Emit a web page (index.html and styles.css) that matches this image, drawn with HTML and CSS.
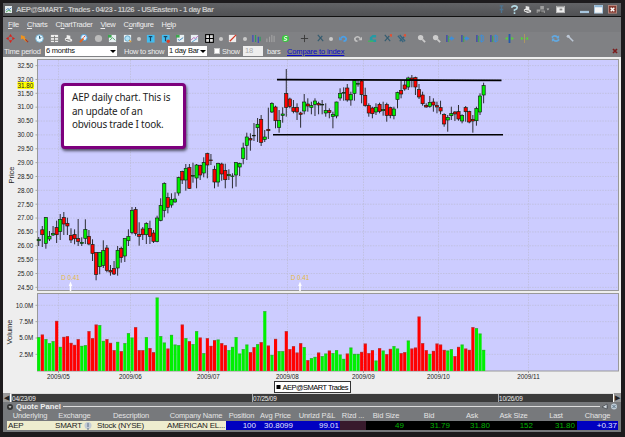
FILE: index.html
```
<!DOCTYPE html>
<html lang="en">
<head>
    <meta charset="UTF-8">
    <title>AEP@SMART - Trades</title>
    <link rel="stylesheet" href="styles.css">
</head>
<body>

<div class="window">
    <div class="title-bar">
        <svg class="app-icon" viewBox="0 0 8 8"><rect width="8" height="8" fill="#e6eef0"/><path d="M1 5l2-2 2 1 2-2" stroke="#2b6fb8" fill="none"/><path d="M1 7l3-2 3 1" stroke="#3a9a48" fill="none"/></svg>
        <span class="title">AEP@SMART - Trades - 04/23 - 11/26 &nbsp;- US/Eastern - 1 day Bar</span>
        <div class="window-tools">
            <svg class="pin" viewBox="0 0 10 10"><path d="M3 1h4M5 1v8M3 5h4" stroke="#4d7390" stroke-width="1.5" fill="none"/></svg>
            <svg class="help" viewBox="0 0 10 10"><path d="M2 3q0-2 3-2t3 2q0 1.500-3 2.500v1.500M5 8v2" stroke="#b4dbe6" stroke-width="1.800" fill="none"/></svg>
            <svg class="printer" viewBox="0 0 10 10"><path d="M3 1l4 1v3l2 1v2L5 9 1 7V5l2-1z" fill="#e8e8e8"/><path d="M2 6l5 1" stroke="#555"/></svg>
            <svg class="link" viewBox="0 0 14 10"><path d="M4 1h4v4H4zM0 5h4v4H0zM5 6h4v3H5z" fill="#a0a0a0"/><path d="M1 8h7" stroke="#333"/><path d="M11 4h3l-1.500 2z" fill="#bbb"/></svg>
            <svg class="dock" viewBox="0 0 10 10"><rect x=".5" y="1.500" width="9" height="7" fill="#eee" stroke="#bbb"/><path d="M1 2h8" stroke="#888"/><rect x="4" y="4" width="3" height="2" fill="#888"/></svg>
            <svg class="minimize" viewBox="0 0 10 10"><rect y="6.500" width="10" height="2.500" fill="#a7c6df"/></svg>
            <svg class="maximize" viewBox="0 0 10 10"><rect x=".5" y=".5" width="9" height="8.500" fill="#f5f5f5" stroke="#a7c6df"/><path d="M1 1.500h8" stroke="#8db4d4" stroke-width="2"/></svg>
            <svg class="close" viewBox="0 0 10 10"><rect x=".5" y=".5" width="9" height="8.500" fill="#84392f" stroke="#b98b82"/><path d="M3 3l4 4M7 3l-4 4" stroke="#fff" stroke-width="1.600"/></svg>
        </div>
    </div>

    <div class="menu-bar">
        <span><u>F</u>ile</span>
        <span><u>C</u>harts</span>
        <span>C<u>h</u>artTrader</span>
        <span><u>V</u>iew</span>
        <span>C<u>o</u>nfigure</span>
        <span>H<u>e</u>lp</span>
    </div>

    <!-- Filled by script.js -->
    <div class="toolbar" id="toolbar"></div>

    <div class="period-bar">
        <span class="period-label">Time period</span>
        <span class="select period-select">6 months</span>
        <span class="show-label">How to show</span>
        <span class="select bar-select">1 day Bar</span>
        <span class="checkbox"></span>
        <span class="bars-show">Show</span>
        <span class="bars-count">18</span>
        <span class="bars-label">bars</span>
        <a class="compare">Compare to index</a>
        <svg class="close-chart" viewBox="0 0 6 6"><path d="M1 1l4 4M5 1L1 5" stroke="#7b1d1d" stroke-width="1.700"/></svg>
    </div>

    <div class="chart-panel">
        <svg class="chart" id="chart" viewBox="3 57 619 336"></svg>
        <div class="note">AEP daily chart. This is<br>an update of an<br>obvious trade I took.</div>
    </div>

    <div class="timeline">
        <span class="scroll-btn">◀</span>
        <div class="timeline-track">
            <span>04/23/09</span>
            <span>07/25/09</span>
            <span>10/26/09</span>
        </div>
        <span class="scroll-btn">▶</span>
    </div>

    <div class="quote-panel">
        <div class="quote-title">
            <svg class="collapse" viewBox="0 0 6 6"><circle cx="3" cy="3" r="3" fill="#333"/><path d="M1.500 2.300h3L3 4.300z" fill="#ddd"/></svg>
            <b>Quote Panel</b>
            <i class="rule"></i>
            <svg class="quote-tools" viewBox="0 0 16 7"><path d="M0 4l5-3v5zM5 4h1" fill="#d4dbe0" stroke="#3d444a" stroke-width=".7"/><circle cx="12" cy="3.500" r="3" fill="#bccad5"/><path d="M10.500 2l3 3M13.500 2l-3 3" stroke="#5c7385"/></svg>
        </div>
        <div class="quote-row quote-head">
            <span>Underlying</span><span>Exchange</span><span>Description</span><span>Company Name</span><span>Position</span><span>Avg Price</span><span>Unrlzd P&amp;L</span><span>Rlzd ...</span><span>Bid Size</span><span>Bid</span><span>Ask</span><span>Ask Size</span><span>Last</span><span>Change</span>
        </div>
        <div class="quote-row quote-data">
            <span class="info">AEP</span>
            <span class="info exchange">SMART <svg viewBox="0 0 8 8"><circle cx="4" cy="3.500" r="3.500" fill="#c3ccd5"/><path d="M4 1v4M4 6v2" stroke="#5d718a"/></svg></span>
            <span class="info">Stock (NYSE)</span>
            <span class="info company">AMERICAN EL...</span>
            <span class="blue">100</span>
            <span class="blue">30.8099</span>
            <span class="blue">99.01</span>
            <span class="realized"></span>
            <span class="green">49</span>
            <span class="green">31.79</span>
            <span class="green">31.80</span>
            <span class="green">152</span>
            <span class="green">31.80</span>
            <span class="blue">+0.37</span>
        </div>
    </div>
</div>

<script src="script.js"></script>
</body>
</html>
```

FILE: styles.css
```
body {
    margin: 0;
    background: #1d1b1d;
    font-family: "Liberation Sans", Arial, sans-serif;
    font-size: 8px;
    overflow: hidden;
}

.window {
    width: 618px;
    height: 429px;
    margin: 3px 4px 5px 3px;
    display: flex;
    flex-direction: column;
    background: #808184;
}

svg {
    display: block;
    flex: none;
}

.title-bar {
    height: 13px;
    display: flex;
    align-items: center;
    background: linear-gradient(#626366, #505154);
    border-bottom: 1px solid #111;
}

.app-icon {
    width: 7px;
    height: 7px;
    margin: 0 4px 0 2px;
}

.title {
    flex: 1;
    color: #c6c6c6;
    font-size: 7.8px;
    font-weight: bold;
    letter-spacing: -0.52px;
    white-space: pre;
}

.window-tools {
    display: flex;
    align-items: center;
    margin-right: 4px;
}

.window-tools svg {
    width: 9px;
    height: 9px;
}

.window-tools .pin { margin-right: 4px; }
.window-tools .help { margin-right: 4px; }
.window-tools .printer { margin-right: 4px; }
.window-tools .link { width: 14px; margin-right: 6px; }
.window-tools .dock { margin-right: 15px; }
.window-tools .minimize { margin-right: 5px; }
.window-tools .maximize { margin-right: 5px; }

.menu-bar {
    height: 15px;
    display: flex;
    align-items: center;
    gap: 8px;
    padding-left: 5px;
    color: #eee;
    font-size: 7.5px;
    letter-spacing: -0.28px;
    background: #7b7c7f;
}

.toolbar {
    height: 13px;
    display: flex;
    align-items: center;
}

.toolbar svg {
    width: 9px;
    height: 9px;
    margin: 0 2.83px;
}

.toolbar .dot {
    width: 4px;
    height: 4px;
    margin: 0 2.35px;
    border-radius: 50%;
    background: #c9c9c9;
    flex: none;
}

.toolbar .gap {
    flex: none;
}

.period-bar {
    height: 12px;
    display: flex;
    align-items: center;
    color: #eee;
    font-size: 7.5px;
    letter-spacing: -0.25px;
    white-space: nowrap;
}

.period-bar > * {
    flex: none;
    box-sizing: border-box;
}

.period-label {
    width: 42px;
    padding-left: 1px;
}

.show-label {
    width: 45px;
    padding-left: 1px;
}

.select {
    height: 10px;
    line-height: 10px;
    padding-left: 1px;
    margin-right: 6px;
    display: flex;
    align-items: center;
    justify-content: space-between;
    background: #fff;
    color: #111;
}

.select::after {
    content: "";
    border: 3px solid transparent;
    border-top: 3px solid #000;
    border-bottom: 0;
    margin-right: 1px;
}

.period-select { width: 72px; }

.bar-select {
    width: 39px;
    margin-right: 7px;
}

.checkbox {
    width: 6px;
    height: 6px;
    background: #fff;
    border: 1px solid #ccc;
    margin-right: 2px;
}

.bars-show { width: 21px; }

.bars-count {
    width: 20px;
    height: 10px;
    line-height: 10px;
    padding-left: 2px;
    margin-right: 4px;
    background: #eee;
    color: #aaa;
}

.bars-label { width: 20px; }

.compare {
    color: #0a0ac8;
    text-decoration: underline;
    letter-spacing: -0.12px;
}

.close-chart {
    width: 6px;
    height: 6px;
    margin: 0 3px 0 auto;
}

.chart-panel {
    position: relative;
    height: 336px;
    background: #eee;
}

.chart {
    width: 619px;
    height: 336px;
}

/* Chart parts */
.plot { fill: #ccccff; stroke: #999; stroke-width: 1; }
.grid { stroke: #bcbcd4; stroke-width: .7; stroke-dasharray: 1.5 1.2; }
.tick { stroke: #888; stroke-width: .7; }
.label { font-size: 6.3px; fill: #222; }
.axis-title { font-size: 7.5px; fill: #222; text-anchor: middle; }
.wick { stroke: #111; stroke-width: .85; }
.up { fill: #00f000; }
.down { fill: #f00; }
.candle { stroke: #102010; stroke-width: .65; }
.vol-cap { fill: #666; opacity: .55; }
.trend { stroke: #000; stroke-width: 1.6; }
.dividend { font-size: 6.3px; fill: #e6b93c; text-anchor: middle; }
.end { text-anchor: end; }
.middle { text-anchor: middle; }

/* Annotation over the chart */
.note {
    position: absolute;
    left: 58px;
    top: 26px;
    width: 111px;
    height: 55px;
    padding: 5px 0 0 8px;
    border: 3px solid #7d007d;
    border-radius: 4px;
    background: #fff;
    box-shadow: 1px 2px 3px rgba(0, 0, 0, 0.6);
    color: #222;
    font-family: "Noto Sans", "Open Sans", sans-serif;
    font-size: 9.9px;
    letter-spacing: -0.18px;
    line-height: 13.6px;
    white-space: nowrap;
}

.timeline {
    height: 9px;
    display: flex;
    align-items: center;
    background: #ddd;
}

.timeline-track {
    flex: 1;
    height: 8px;
    display: grid;
    grid-template-columns: 241px 246px 1fr;
    background: #3b3b3b;
    border-left: 1px solid #fff;
    border-right: 1px solid #fff;
}

.timeline-track span {
    border-left: 1px solid #aaa;
    color: #eee;
    font-size: 6.4px;
    letter-spacing: -0.15px;
    line-height: 9px;
}

.scroll-btn {
    width: 7px;
    height: 9px;
    line-height: 9px;
    text-align: center;
    font-size: 7px;
    color: #222;
    background: #999;
    overflow: hidden;
}

.quote-panel {
    flex: 1;
    padding: 0 3px 0 4px;
    background: #77797c;
}

.quote-title {
    height: 9px;
    display: flex;
    align-items: center;
    color: #eee;
    font-size: 7.7px;
}

.collapse {
    width: 6px;
    height: 6px;
    margin-right: 3px;
}

.rule {
    flex: 1;
    height: 1px;
    margin: 0 2px;
    background: #ddd;
}

.quote-tools {
    width: 16px;
    height: 7px;
}

.quote-row {
    display: grid;
    grid-template-columns: 46px 43px 70px 60px 31px 37px 46px 26px 40px 46px 40px 43px 42px 41px;
    white-space: nowrap;
}

.quote-head {
    height: 10px;
    line-height: 10px;
    color: #e4e4e4;
    font-size: 7.5px;
    letter-spacing: -0.13px;
    text-align: center;
}

.quote-data {
    height: 9px;
    line-height: 9px;
    font-size: 8px;
}

.quote-data span {
    box-sizing: border-box;
    text-align: right;
    padding-right: 1px;
    background: #000;
}

.quote-data .info {
    background: #eeedcf;
    color: #222;
    text-align: left;
    letter-spacing: -0.2px;
    padding-left: 1px;
}

.quote-data .exchange {
    display: flex;
    align-items: center;
    gap: 2px;
    padding-left: 2px;
}

.exchange svg {
    width: 8px;
    height: 8px;
}

.quote-data .blue { background: #0000c0; color: #e0e0ff; }
.quote-data .realized { background: #381a2c; }
.quote-data .green { color: #00b400; padding-right: 2px; }
```

FILE: script.js
```
const chart = document.getElementById('chart');
let parts = [];

// Toolbar icons, drawn on a 10x10 grid
const wand = '<path d="M2 1l6 7M7 2L2 8" stroke="#345c70" stroke-width="1.3"/>';
const zoom = '<circle cx="4" cy="4" r="3" fill="#ccc"/><path d="M6 6l3 3" stroke="#ccc" stroke-width="2"/>';
const barMove = '<path d="M1 1v8" stroke="#3c49ad" stroke-width="1.5"/><path d="M3 2v7" stroke="#30ab49"/><path d="M9 5H5M7 3L4.500 5 7 7" stroke="#3c8fda" stroke-width="1.5" fill="none"/>';
const barFit = '<path d="M1 1v8" stroke="#3c49ad" stroke-width="1.5"/><path d="M3 2v7" stroke="#30ab49"/><path d="M6 1v8M4.500 3L6 1l3 2M4.500 7L6 9l3-2M8 3v4" stroke="#3c8fda" fill="none"/>';
const page = '<rect x="1" y="1" width="8" height="8" fill="#e8eff2"/>';
const icons = [
    '<path d="M5 0l2 3H3zM5 10l2-3H3zM0 5l3-2v4zM10 5L7 3v4z" fill="#d9221b"/>',
    '<path d="M1 1l5 2-1 1 4 4-2 1-4-4-2 1z" fill="#ef931e"/><path d="M6 6l3 3" stroke="#933" stroke-width="1.3"/>',
    '<circle cx="5" cy="5" r="4.200" fill="#e4f6ff" stroke="#74b5d8"/><path d="M5 2v3l2-1" stroke="#23536e" fill="none"/>',
    '<rect x="1" y="1" width="8" height="8" fill="#eee"/><path d="M1 4h8M1 7h8M5 2v7" stroke="#7c7c7c"/>',
    '<path d="M3 1l4 1v3l2 1v2L5 9 1 7V5l2-1z" fill="#eee"/><path d="M2 6l5 1" stroke="#666"/>',
    '<circle cx="5.500" cy="4" r="3.500" fill="#dff3ff" stroke="#4aa0dd"/><path d="M5 5L1 9" stroke="#e36421" stroke-width="2"/><path d="M5 4l2-2" stroke="#d22"/>',
    '<circle cx="5" cy="5" r="4" fill="#bbb"/>',
    page + '<path d="M0 1h4v3H0z" fill="#3aa84d"/><path d="M2 7l3-3 3 3" stroke="#48a565" fill="none"/>',
    page + '<circle cx="5" cy="5" r="3" fill="#b4e2f6" stroke="#60a5c8"/><path d="M7 7l2 2" stroke="#d89b3c" stroke-width="1.5"/>',
    'dot',
    '<rect x="1" y="1" width="8.500" height="8.500" fill="#43bdf0"/><path d="M3 3h4M5 3v5" stroke="#174765" stroke-width="1.3"/>',
    '<rect x="1" y="1" width="8.500" height="8.500" fill="#43bdf0"/><path d="M3 3h4M5 3v5" stroke="#174765" stroke-width="1.3"/><circle cx="8" cy="8" r="2" fill="#dd3d22"/>',
    page + '<path d="M0 1h4v3H0z" fill="#3aa84d"/><path d="M2 6l2 1 4-3" stroke="#3685bb" fill="none"/>',
    page + '<path d="M1 7l3-3 2 1 3-3" stroke="#b662ba" fill="none"/><path d="M2 9l6-4" stroke="#55a0d4"/>',
    '<rect x=".7" y=".7" width="8.600" height="8.600" fill="#ddd" stroke="#000" stroke-width="1.2"/><path d="M5 0v10M0 5h10" stroke="#000" stroke-width="1.2"/>',
    'dot',
    '<rect x="1" y="1" width="8" height="8" fill="#eee"/><path d="M2 8l7-7" stroke="#d33724" stroke-width="1.4"/>',
    'dot',
    '<path d="M1 1v8M7 3v7" stroke="#3643c5" stroke-width="1.2"/><path d="M4 1v8M9 3v5" stroke="#289d5b" stroke-width="1.2"/>',
    '<path d="M1 5v4M4 3v6M6.500 1v8M9 2v7" stroke="#aaa"/>',
    '<circle cx="5" cy="5" r="4" fill="#39c93e"/><path d="M7 3Q3 2 4 5q4 0 2 2H3" stroke="#fff" fill="none"/>',
    4,
    '<path d="M5 1v8M1 5h8" stroke="#383838"/>',
    2,
    wand,
    -2,
    'dot',
    1,
    '<path d="M2 5q3-4 6 0 0 3-3 3" stroke="#4b9fe6" stroke-width="2" fill="none"/><path d="M0 3v4h4z" fill="#4b9fe6"/>',
    '<path d="M8 5Q5 1 2 5q0 3 3 3" stroke="#c2c2c2" stroke-width="1.800" fill="none"/><path d="M10 3v4H6z" fill="#c2c2c2"/>',
    '<path d="M2 9V4l3-3h4v3H5v2h4v3z" fill="#259aa5"/><path d="M0 8h6" stroke="#46b45b" stroke-width="1.5"/>',
    wand + '<circle cx="9" cy="1.500" r="1.500" fill="#e15034"/>',
    '<path d="M1 2l6 7M3 1l6 7M8 3L3 8" stroke="#35647d" stroke-width="1.5"/><circle cx="9" cy="1.500" r="1.500" fill="#e15034"/>',
    5,
    zoom, zoom, barMove, barMove, barFit, barFit,
    '<path d="M5 0v10" stroke="#245aab" stroke-width="2"/><path d="M0 5l3-2v4zM10 5L7 3v4z" fill="#55d13b"/>',
    '<path d="M5 0v10" stroke="#b19a5e"/><path d="M4 5L1 3v4zM6 5l3-2v4z" fill="#55d13b"/>',
    17,
    '<path d="M1 4q3-4 7 0M9 6q-3 4-7 0" stroke="#62a9e1" stroke-width="2" fill="none"/><path d="M9 1v4H6zM1 9V5h3z" fill="#62a9e1"/>',
    '<path d="M3 3l5 5" stroke="#bcc7d5" stroke-width="1.800"/><circle cx="2.500" cy="2.500" r="1.800" fill="#bcc7d5"/>'
];

document.getElementById('toolbar').innerHTML = icons.map(icon => {
    if (icon === 'dot') return '<span class="dot"></span>';
    if (typeof icon === 'number') return `<span class="gap" style="margin-left:${icon}px"></span>`;
    return `<svg viewBox="0 0 10 10" fill="none">${icon}</svg>`;
}).join('');

// One row per day: direction, high, body top, body bottom, low, volume height
const days = [
    ['g', 237, 239, 241, 246, 33.7], ['r', 226, 229.5, 235, 247, 36.3], ['g', 217, 217.3, 243.7, 248.7, 31.7],
    ['g', 231, 236, 239.3, 241, 27.7], ['g', 226, 233.3, 235.3, 236, 29.7], ['r', 220.7, 227.3, 235, 243, 50],
    ['g', 214, 219.3, 231.7, 240, 24], ['r', 212, 217.3, 224.3, 235, 34], ['r', 217.7, 223, 226.3, 235, 34.7],
    ['r', 228.3, 235, 240.3, 243, 28], ['r', 229.3, 234.3, 239, 244.3, 26], ['r', 219, 238.3, 241.7, 246, 31.7],
    ['g', 237.3, 242, 243.7, 246, 25], ['g', 219.3, 229.3, 238.7, 244, 25.7], ['r', 230, 236, 244.3, 245.3, 39.7],
    ['r', 239.3, 244.3, 253.7, 261, 32.7], ['r', 252.3, 252.3, 274.7, 280.3, 46.3], ['g', 252.3, 252.3, 267, 274.3, 45.7],
    ['g', 240.3, 250.3, 265.7, 268, 30], ['r', 245, 247.7, 270.7, 272.3, 31.7], ['r', 265, 270.3, 272.3, 275.7, 28],
    ['r', 261, 268.3, 274.3, 275, 20.7], ['g', 246, 250, 268.3, 275.7, 29], ['r', 246.7, 248, 257.7, 262.7, 19.7],
    ['g', 238.3, 238.3, 256.3, 262, 27.7], ['g', 229.3, 236.3, 241, 246, 37.7], ['g', 207, 210.3, 232.7, 234.3, 33.3],
    ['r', 207, 209.3, 233.7, 235.7, 43.7], ['r', 222.3, 234, 236.7, 245.7, 20.7], ['r', 227, 228.7, 235, 240, 20.7],
    ['g', 222.3, 223.3, 235, 244, 33.7], ['r', 220.7, 228.3, 236.7, 244, 22.7], ['r', 230, 232.7, 241.7, 243, 18.7],
    ['g', 215.7, 217.7, 241.7, 242.3, 73.3], ['g', 198.3, 205.3, 220.7, 221.3, 34.7], ['g', 182.3, 183.3, 210.7, 217.3, 28.3],
    ['r', 192.7, 197.3, 207.7, 213.3, 22.3], ['g', 193.3, 199.3, 205.3, 207.7, 36], ['g', 192.3, 198.7, 202.3, 202.7, 26.3],
    ['g', 176.7, 177.3, 193.3, 195.7, 25.7], ['r', 170.7, 171.3, 180.3, 184, 46.3], ['g', 164, 168.3, 180.3, 190.7, 32.7],
    ['r', 164, 167.3, 188.7, 188.7, 29.7], ['g', 162.7, 175.3, 176.3, 182.7, 26.7], ['g', 164, 164.7, 178.3, 188.3, 39.7],
    ['r', 164.7, 165.3, 175.3, 180, 33.3], ['g', 157.3, 162.3, 173.3, 177.3, 17.7], ['r', 152.7, 153.3, 165.3, 178.3, 32.7],
    ['r', 154, 159.7, 160.7, 165, 25], ['r', 165.7, 169, 182.3, 188.3, 30.7], ['g', 162.7, 163.3, 182.3, 186.7, 31.3],
    ['r', 162.7, 163.7, 174.3, 180.7, 27.7], ['r', 163.7, 170.3, 180, 188.3, 25.7], ['g', 169.3, 174, 176, 180, 20.7],
    ['g', 173.3, 175.7, 176.7, 188.3, 24], ['g', 162.3, 162.3, 175.3, 186.7, 33.7], ['g', 162.7, 163.3, 167.3, 176, 17.3],
    ['g', 142.7, 147.7, 158.7, 164.3, 21.7], ['g', 132.7, 136.7, 145.7, 160, 26.3], ['r', 133.3, 138.3, 140.3, 150.7, 18.7],
    ['r', 123, 135, 136, 141, 23.7], ['g', 118, 124, 128, 142, 26.7], ['r', 115, 119, 142.7, 146, 28.7],
    ['g', 130, 136.7, 139.7, 142, 59.7], ['r', 107.7, 129, 131, 139, 25.3], ['g', 102.3, 103.3, 112.3, 113, 16],
    ['r', 105.7, 106.7, 121, 128.3, 32], ['g', 110, 120.3, 127.7, 132.7, 19.7], ['g', 107.3, 113.7, 115.7, 122.7, 19.7],
    ['r', 69, 93.3, 107.7, 116.7, 39.7], ['r', 97.7, 98.7, 106.7, 108.3, 21.7], ['r', 100, 107.3, 111.7, 113.3, 24.7],
    ['r', 103.3, 107, 112.3, 120, 18.3], ['r', 111.7, 112.7, 114.7, 127.7, 27.7], ['g', 94, 101.7, 111.3, 114.3, 23.7],
    ['r', 98.3, 103.7, 106.3, 111.7, 10.7], ['g', 101.7, 105.3, 107.7, 114.3, 12.7], ['g', 98.3, 100.7, 104.7, 116, 14],
    ['r', 101.7, 103, 105.3, 114.3, 18.3], ['g', 100, 104, 105.3, 114.3, 14.7], ['g', 103.3, 110.3, 113.3, 116.7, 17.3],
    ['r', 108.3, 110.3, 112.7, 118.3, 20.3], ['g', 111.7, 114, 116.7, 128.3, 17.7], ['g', 101.7, 101.7, 116.3, 118.3, 20.7],
    ['g', 88.3, 93.3, 98.3, 100.7, 16.3], ['g', 87.3, 92.3, 93.3, 100.7, 12], ['r', 84, 87.7, 100.3, 101.7, 17.3],
    ['g', 91.7, 94.3, 100.3, 105.7, 23.3], ['g', 80, 80, 93.7, 100.7, 17], ['g', 80, 83.3, 84.3, 86.7, 17],
    ['r', 80, 80.7, 95, 103.3, 19], ['r', 87.7, 95, 105.7, 106.7, 27.3], ['r', 103.3, 105.3, 113.3, 116.7, 17.7],
    ['r', 106.7, 107.7, 114, 118.3, 20.7], ['g', 103.3, 107, 112.3, 115, 10.3], ['r', 102.7, 104, 111.7, 113.3, 22.7],
    ['g', 101.7, 109.3, 111, 115.7, 20.3], ['r', 102.7, 104.3, 115.7, 121.7, 16.7], ['r', 106.7, 107.3, 115.7, 118.3, 22],
    ['g', 106.7, 108.7, 116, 119.3, 24.7], ['g', 91.7, 92.3, 99.7, 108.3, 22.3], ['r', 81, 90.3, 94.3, 98.3, 17.7],
    ['r', 80, 84.7, 89.3, 90.7, 18.7], ['g', 76.7, 77.7, 87.3, 90, 30.3], ['r', 75, 77.7, 80.3, 87.3, 22.3],
    ['r', 76.7, 77.3, 87.3, 95, 23.3], ['r', 84, 89.3, 97.3, 99, 54.3], ['r', 91.7, 94.7, 104, 105.7, 27.7],
    ['r', 103.3, 105, 107.3, 107.7, 20.7], ['g', 96, 102.3, 106.7, 107.7, 17], ['r', 98.3, 101.7, 105.3, 111.7, 20],
    ['r', 101.7, 105.3, 107.3, 113.3, 27.3], ['r', 100.7, 107.3, 111.3, 114.3, 26.3], ['r', 113.3, 114.3, 124.3, 126.7, 21],
    ['g', 115, 117.3, 120.3, 131.7, 20.3], ['g', 106.7, 113.3, 116, 120, 21.7], ['r', 111, 111.7, 114.3, 121, 14.7],
    ['r', 105, 111.3, 119.3, 120.7, 24], ['g', 114.3, 115.3, 121.3, 123.3, 26.3], ['r', 106, 107.3, 112, 121.7, 22.3],
    ['r', 110.7, 111.3, 122.3, 123.3, 21], ['r', 115, 119, 121.3, 132.7, 43.7], ['g', 106.7, 108.3, 121, 125.7, 42.7],
    ['g', 93.3, 95.7, 112.3, 115, 37.3], ['g', 82.7, 85.3, 95.3, 103.3, 21]
];

function line(cls, x1, y1, x2, y2) {
    parts.push(`<line class="${cls}" x1="${x1}" y1="${y1}" x2="${x2}" y2="${y2}"/>`);
}

function rect(cls, x, y, w, h) {
    parts.push(`<rect class="${cls}" x="${x}" y="${y}" width="${w}" height="${h}"/>`);
}

function text(cls, x, y, str) {
    parts.push(`<text class="${cls}" x="${x}" y="${y}">${str}</text>`);
}

rect('plot', 37.5, 59.5, 581, 231);
rect('plot', 37.5, 293.5, 581, 77.5);

// Price scale
for (let i = 0; i <= 16; i++) {
    const y = 65.6 + i * 13.86;
    line('grid', 38, y, 618, y);
    line('tick', 35.5, y, 37, y);
    text('label end', 33.3, y + 2.3, (32.5 - i * 0.5).toFixed(2));
}
parts.push('<rect x="17.5" y="82" width="16.500" height="7" fill="#ffff00"/>');
text('label end', 33.3, 87.8, '31.80');

// Volume scale
['10.0M', '7.5M', '5.0M', '2.5M'].forEach((label, i) => {
    const y = 305.3 + i * 16.35;
    line('grid', 38, y, 618, y);
    line('tick', 35.5, y, 37, y);
    text('label end', 33.3, y + 2.3, label);
});

// Months
[58.5, 130.5, 208.5, 287.5, 363.5, 438.5, 528.5].forEach((x, i) => {
    line('grid', x, 60, x, 290);
    line('grid', x, 294, x, 371);
    line('tick', x, 371, x, 373);
    text('label middle', x, 379, '2009/' + String(i + 5).padStart(2, '0'));
});

days.forEach((d, i) => {
    const x = 38.7 + i * 3.588;
    const cls = d[0] === 'g' ? 'up' : 'down';
    line('wick', x, d[1], x, d[4]);
    rect('candle ' + cls, x - 1.6, d[2] + 0.3, 3.2, Math.max(d[3] - d[2] - 0.6, 0.6));
    rect(cls, x - 1.5, 370.9 - d[5], 3.1, d[5]);
    rect('vol-cap', x - 1.5, 370.9 - d[5], 3.1, 0.8);
});

line('trend', 277, 79.6, 501.500, 80.4);
line('trend', 273, 134.7, 503, 134.7);

// Dividend marks
[70.5, 300].forEach(x => {
    text('dividend', x, 280.3, 'D 0.41');
    parts.push(`<path d="M${x - 1.8} 286L${x} 281.500L${x + 1.8} 286H${x + 0.8}V291H${x - 0.8}V286z" fill="#fff"/>`);
});

parts.push('<text class="axis-title" transform="translate(13.500 175) rotate(-90)">Price</text>');
parts.push('<text class="axis-title" transform="translate(12.300 332) rotate(-90)">Volume</text>');

// Legend
parts.push('<rect x="274.500" y="381.500" width="76" height="11" fill="#fff" stroke="#333"/><rect x="276.500" y="385" width="4" height="4"/>');
parts.push('<text x="282.500" y="390" font-size="7.500" textLength="66">AEP@SMART Trades</text>');

chart.innerHTML = parts.join('');
```
